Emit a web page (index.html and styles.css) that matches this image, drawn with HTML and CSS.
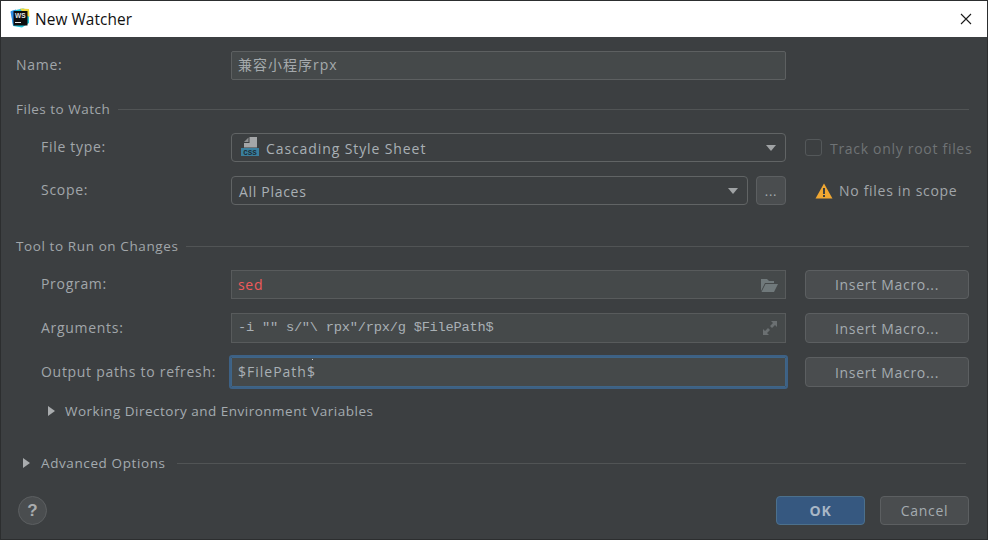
FILE: index.html
```html
<!DOCTYPE html>
<html lang="en">
<head>
<meta charset="utf-8">
<title>New Watcher</title>
<link rel="stylesheet" href="styles.css">
</head>
<body>
<div class="window">
  <header class="titlebar">
    <svg class="logo" width="20" height="20" viewBox="0 0 20 20">
      <path d="M1 3 L13 0.5 L19 2 L19 15 L12 19.5 L3 18 Z" fill="#21c4d8"/>
      <path d="M10 0.5 L19 1 L19.5 9 L14 6 Z" fill="#f0d93a"/>
      <path d="M0.5 3.5 L6 1.5 L5 18 L3 17 Z" fill="#2f8fe8"/>
      <rect x="3.5" y="3" width="14" height="14.5" fill="#0d0d0d"/>
      <text x="5" y="10" class="logo-text">WS</text>
      <rect x="5" y="14" width="6" height="1" fill="#e8e8e8"/>
    </svg>
    <span class="title">New Watcher</span>
    <svg class="close" width="12" height="12" viewBox="0 0 12 12"><path d="M1 1 L11 11 M11 1 L1 11" stroke="#1a1a1a" stroke-width="1.1" fill="none"/></svg>
  </header>

  <main class="content">
    <div class="row row-name">
      <label class="label">Name:</label>
      <div class="input cjk">兼容小程序rpx</div>
    </div>

    <div class="section-head"><span>Files to Watch</span><i class="rule"></i></div>

    <div class="row row-sub">
      <label class="label">File type:</label>
      <div class="input combo">
        <svg class="css-icon" width="18" height="19" viewBox="0 0 18 19">
          <path d="M8.5 0 H16 V10.5 H3 V6 H8.5 Z" fill="#a4a6a8"/>
          <path d="M3 5 L7.5 0.5 V5 Z" fill="#8d8f91"/>
          <rect x="0" y="11" width="18" height="8" fill="#3a7f9e"/>
          <text x="9" y="18" class="css-text">CSS</text>
        </svg>
        <span class="wide">Cascading Style Sheet</span>
        <i class="arrow"></i>
      </div>
      <div class="side side-check">
        <span class="checkbox"></span>
        <span class="muted">Track only root files</span>
      </div>
    </div>

    <div class="row row-sub gap14">
      <label class="label">Scope:</label>
      <div class="split">
        <div class="input combo"><span class="nudge">All Places</span><i class="arrow"></i></div>
        <button class="btn dots">...</button>
      </div>
      <div class="side side-warn">
        <svg width="18" height="16" viewBox="0 0 18 16"><path d="M9 0.5 L17.5 15.5 H0.5 Z" fill="#f0a732"/><rect x="8" y="5" width="2" height="6" fill="#3c3f41"/><rect x="8" y="12" width="2" height="2" fill="#3c3f41"/></svg>
        <span>No files in scope</span>
      </div>
    </div>

    <div class="section-head head-tool"><span>Tool to Run on Changes</span><i class="rule"></i></div>

    <div class="row row-sub">
      <label class="label">Program:</label>
      <div class="input square error"><span>sed</span>
        <svg class="end-icon" width="18" height="14" viewBox="0 0 18 14"><path d="M1 1 H7 L9 3 H14 V5 H5 L1 13 Z" fill="#70797b"/><path d="M5.5 6 H18 L14 14 H1.5 Z" fill="#70797b"/></svg>
      </div>
      <button class="btn macro">Insert Macro...</button>
    </div>

    <div class="row row-sub gap14 tall">
      <label class="label">Arguments:</label>
      <div class="input square mono"><span>-i "" s/"\ rpx"/rpx/g $FilePath$</span>
        <svg class="end-icon" width="16" height="16" viewBox="0 0 16 16"><path d="M9 1 H15 V7 L13 5 L10 8 L8 6 L11 3 Z" fill="#6b7072"/><path d="M1 15 V9 L3 11 L6 8 L8 10 L5 13 L7 15 Z" fill="#6b7072"/></svg>
      </div>
      <button class="btn macro">Insert Macro...</button>
    </div>

    <div class="row row-sub gap14 tall">
      <label class="label">Output paths to refresh:</label>
      <div class="input square focused"><span>$FilePath$</span></div>
      <button class="btn macro">Insert Macro...</button>
    </div>

    <div class="disclosure disclosure-inner"><i class="tri"></i><span>Working Directory and Environment Variables</span></div>

    <div class="disclosure disclosure-outer"><i class="tri"></i><span>Advanced Options</span><i class="rule"></i></div>
  </main>

  <footer class="footer">
    <button class="help">?</button>
    <div class="actions">
      <button class="btn primary">OK</button>
      <button class="btn cancel">Cancel</button>
    </div>
  </footer>
</div>
</body>
</html>
```
FILE: styles.css
```css
* { box-sizing: border-box; }
html, body { margin: 0; padding: 0; }
body {
  width: 988px;
  height: 540px;
  overflow: hidden;
  background: #3c3f41;
  font-family: "Open Sans", "Noto Sans CJK SC", sans-serif;
  font-size: 14px;
  letter-spacing: 0.7px;
  color: #a9b0b5;
}
.window {
  width: 988px;
  height: 540px;
  display: flex;
  flex-direction: column;
  border: 1px solid #2c2e2f;
  background: #3c3f41;
}
.titlebar {
  height: 36px;
  flex: none;
  background: #fff;
  display: flex;
  align-items: center;
  padding-left: 9px;
  padding-right: 15px;
}
.logo { flex: none; margin-top: -2px; }
.logo-text { font: 700 6.5px "Liberation Sans", sans-serif; fill: #e8e8e8; letter-spacing: 0; }
.title {
  margin-left: 5px;
  font: 15.4px "Open Sans", sans-serif;
  color: #111;
  letter-spacing: 0.1px;
}
.close { margin-left: auto; }

.content {
  flex: 1;
  padding: 14px 18px 0 15px;
  display: flex;
  flex-direction: column;
}
.row {
  display: grid;
  grid-template-columns: 171px 555px 164px;
  column-gap: 19px;
  align-items: center;
  height: 29px;
  width: 953px;
}
.row-name { grid-template-columns: 196px 555px; }
.row-sub { padding-left: 25px; }
.gap14 { margin-top: 14px; }
.tall { height: 30px; }
.label { color: #a1a6aa; white-space: nowrap; padding-bottom: 2px; }

.input {
  height: 100%;
  background: #45494a;
  border: 1px solid #5d6061;
  border-radius: 2px;
  padding: 0 7px 0 6px;
  display: flex;
  align-items: center;
  color: #a9b0b5;
  white-space: nowrap;
}
.cjk { color: #a4a9ac; letter-spacing: 1px; padding-bottom: 3px; }
.combo { background: #3c3f41; border-radius: 4px; border-color: #616465; padding-left: 7px; }
.css-icon { margin-left: 2px; margin-right: 7px; margin-bottom: 2px; flex: none; }
.css-text { font: 700 7.5px "Liberation Mono", monospace; fill: #1d2b33; text-anchor: middle; letter-spacing: 0; }
.wide { letter-spacing: 0.9px; padding-top: 1px; }
.nudge { padding-top: 1px; }
.arrow {
  margin-left: auto;
  margin-right: 2px;
  width: 0; height: 0;
  border-left: 5.5px solid transparent;
  border-right: 5.5px solid transparent;
  border-top: 6px solid #a0a3a5;
}
.split { display: flex; gap: 8px; height: 100%; }
.split .combo { flex: 1; }
.square { border-radius: 0; border-color: #585b5c; }
.error { color: #f05a5a; }
.mono { font-family: "Liberation Mono", monospace; font-size: 13.7px; letter-spacing: -0.23px; padding-bottom: 2px; }
.mono .end-icon { margin-top: 2px; }
.end-icon { margin-left: auto; flex: none; }
.focused {
  border: 1px solid #3f6587;
  outline: 2px solid #3d6185;
  border-radius: 1px;
  letter-spacing: 1px;
  position: relative;
  padding-bottom: 2px;
}
.focused::after {
  content: "";
  position: absolute;
  left: 80px;
  top: 1px;
  width: 1px;
  height: 1px;
  background: #d0d0d0;
}
.side { display: flex; align-items: center; white-space: nowrap; }
.side-check { gap: 8px; }
.checkbox {
  width: 17px; height: 17px;
  border: 1px solid #54585a;
  border-radius: 3px;
  flex: none;
}
.muted { color: #6f7375; padding-top: 1px; }
.side-warn { gap: 6px; padding-left: 10px; color: #a1a6aa; }

.btn {
  font-family: "Open Sans", sans-serif;
  font-size: 14px;
  letter-spacing: 0.7px;
  color: #a4abb0;
  background: #4a4d4f;
  border: 1px solid #5c5f61;
  border-radius: 4px;
  padding: 0;
  height: 100%;
}
.macro { width: 164px; }
.dots { width: 30px; flex: none; font-size: 13px; }

.section-head {
  display: flex;
  align-items: center;
  gap: 8px;
  height: 18px;
  margin-top: 20px;
  margin-bottom: 15px;
  width: 953px;
  color: #a1a6aa;
  font-size: 13.5px;
  letter-spacing: 0.5px;
}
.head-tool { margin-top: 32px; letter-spacing: 0.6px; }
.rule { flex: 1; height: 1px; background: #515455; }

.disclosure {
  display: flex;
  align-items: center;
  height: 18px;
  font-size: 13.5px;
  color: #a4abb0;
  letter-spacing: 0.5px;
}
.disclosure-inner { margin-top: 15px; padding-left: 32px; gap: 10px; }
.disclosure-outer { margin-top: 34px; padding-left: 7px; gap: 11px; width: 950px; letter-spacing: 0.6px; }
.tri {
  width: 0; height: 0; flex: none;
  border-top: 5.5px solid transparent;
  border-bottom: 5.5px solid transparent;
  border-left: 7px solid #a9acae;
}

.footer {
  height: 43px;
  flex: none;
  padding: 0 18px 14px 17px;
  display: flex;
  align-items: stretch;
  justify-content: space-between;
}
.help {
  width: 29px; height: 29px;
  border-radius: 50%;
  background: #4a4d4f;
  border: 1px solid #5c5f61;
  color: #a9acae;
  font: 700 17px "Liberation Sans", sans-serif;
  padding: 0;
}
.actions { display: flex; gap: 15px; }
.actions .btn { width: 89px; }
.primary {
  background: #365880;
  border-color: #4c708c;
  color: #a9b7c6;
  font-weight: 700;
}
```
